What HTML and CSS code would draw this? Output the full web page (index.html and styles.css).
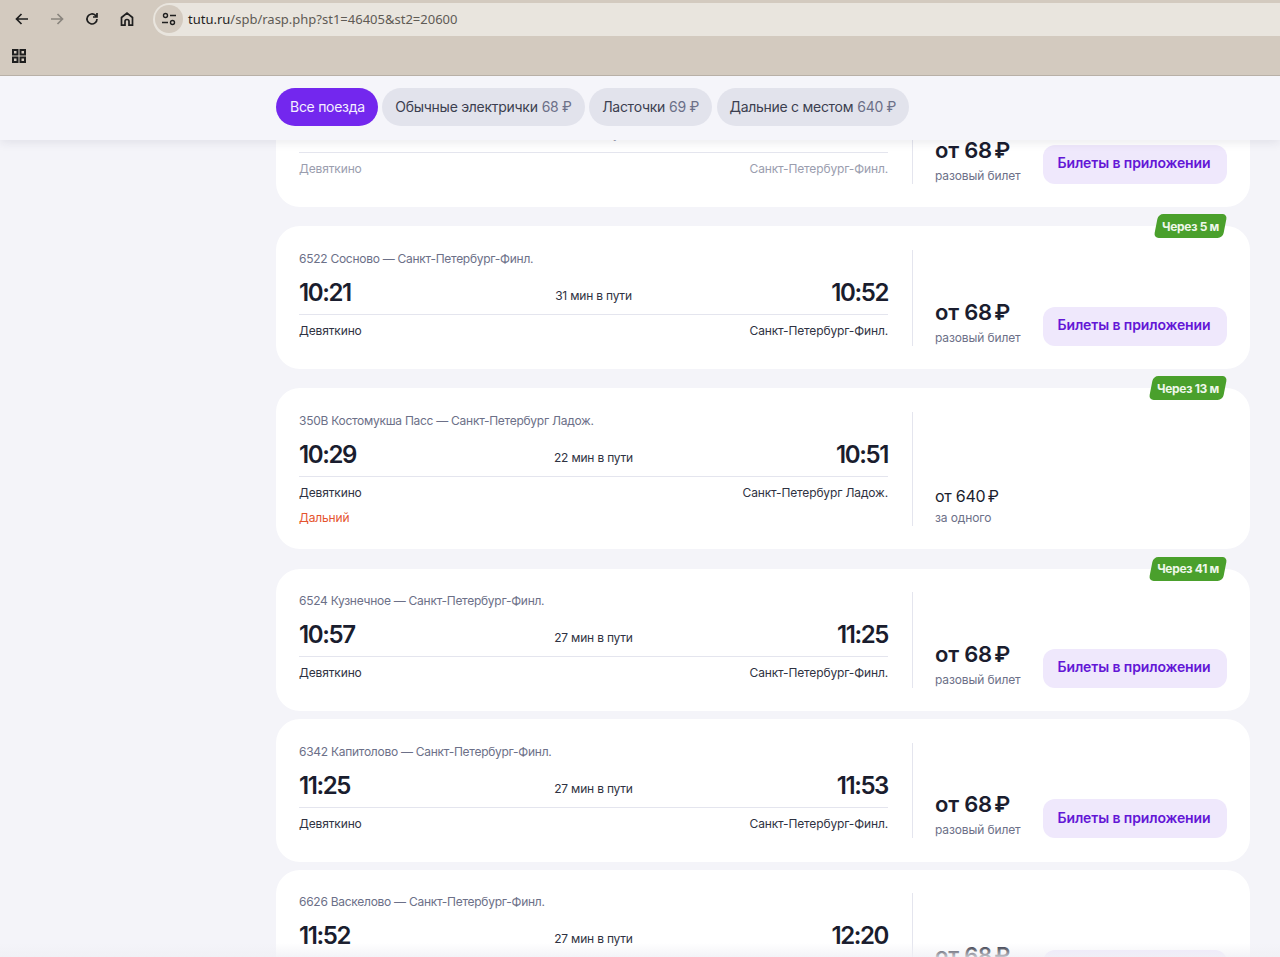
FILE: index.html
```html
<!DOCTYPE html>
<html lang="ru">
<head>
<meta charset="utf-8">
<title>tutu.ru</title>
<link rel="stylesheet" href="styles.css">
</head>
<body>
<div class="app">
  <header class="chrome">
    <div class="toolbar">
      <button class="tool"><svg width="16" height="16" viewBox="0 0 16 16"><path d="M14 8H3M7.500 3 2.500 8l5 5" class="ic"/></svg></button>
      <button class="tool"><svg width="16" height="16" viewBox="0 0 16 16"><path d="M2 8h11M8.500 3l5 5-5 5" class="ic dim"/></svg></button>
      <button class="tool"><svg width="16" height="16" viewBox="0 0 16 16"><path d="M13 8a5 5 0 1 1-1.500-3.600L13 6M13 2v4H9" class="ic"/></svg></button>
      <button class="tool"><svg width="16" height="16" viewBox="0 0 16 16"><path d="M2.500 14.200V6.500L8 2l5.500 4.500v7.700H10V10.500a2 2 0 0 0-4 0v3.700z" class="ic"/></svg></button>
      <div class="omnibox">
        <span class="site"><svg width="16" height="16" viewBox="0 0 16 16"><circle cx="4.500" cy="4.500" r="2" class="ic thin"/><path d="M9 4.500h6M1 11.500h6" class="ic thin"/><circle cx="11.500" cy="11.500" r="2" class="ic thin"/></svg></span>
        <span class="url"><b>tutu.ru</b>/spb/rasp.php?st1=46405&amp;st2=20600</span>
      </div>
    </div>
    <div class="bookmarks">
      <svg width="14" height="14" viewBox="0 0 14 14"><path d="M1 1h4.500v4.500H1zM8.500 1H13v4.500H8.500zM1 8.500h4.500V13H1zM8.500 8.500H13V13H8.500z" class="ic bold"/></svg>
    </div>
  </header>
  <div class="page">
    <nav class="filters">
      <a class="pill active">Все поезда</a>
      <a class="pill">Обычные электрички <span>68 ₽</span></a>
      <a class="pill">Ласточки <span>69 ₽</span></a>
      <a class="pill">Дальние с местом <span>640 ₽</span></a>
    </nav>
    <main class="list">
      <article class="card past">
        <div class="info">
          <p class="route">6520 Сосново — Санкт-Петербург-Финл.</p>
          <div class="times"><strong>10:13</strong><em>31 мин в пути</em><strong>10:44</strong></div>
          <div class="stations"><span>Девяткино</span><span>Санкт-Петербург-Финл.</span></div>
        </div>
        <div class="buy">
          <div class="price"><b>от 68 <i>₽</i></b><small>разовый билет</small></div>
          <a class="app-btn">Билеты в приложении</a>
        </div>
      </article>
      <article class="card c2">
        <span class="badge">Через 5 м</span>
        <div class="info">
          <p class="route">6522 Сосново — Санкт-Петербург-Финл.</p>
          <div class="times"><strong>10:21</strong><em>31 мин в пути</em><strong>10:52</strong></div>
          <div class="stations"><span>Девяткино</span><span>Санкт-Петербург-Финл.</span></div>
        </div>
        <div class="buy">
          <div class="price"><b>от 68 <i>₽</i></b><small>разовый билет</small></div>
          <a class="app-btn">Билеты в приложении</a>
        </div>
      </article>
      <article class="card c3">
        <span class="badge">Через 13 м</span>
        <div class="info">
          <p class="route">350В Костомукша Пасс — Санкт-Петербург Ладож.</p>
          <div class="times"><strong>10:29</strong><em>22 мин в пути</em><strong>10:51</strong></div>
          <div class="stations"><span>Девяткино</span><span>Санкт-Петербург Ладож.</span></div>
          <p class="kind">Дальний</p>
        </div>
        <div class="buy">
          <div class="price light"><b>от 640 <i>₽</i></b><small>за одного</small></div>
        </div>
      </article>
      <article class="card c4">
        <span class="badge">Через 41 м</span>
        <div class="info">
          <p class="route">6524 Кузнечное — Санкт-Петербург-Финл.</p>
          <div class="times"><strong>10:57</strong><em>27 мин в пути</em><strong>11:25</strong></div>
          <div class="stations"><span>Девяткино</span><span>Санкт-Петербург-Финл.</span></div>
        </div>
        <div class="buy">
          <div class="price"><b>от 68 <i>₽</i></b><small>разовый билет</small></div>
          <a class="app-btn">Билеты в приложении</a>
        </div>
      </article>
      <article class="card c5">
        <div class="info">
          <p class="route">6342 Капитолово — Санкт-Петербург-Финл.</p>
          <div class="times"><strong>11:25</strong><em>27 мин в пути</em><strong>11:53</strong></div>
          <div class="stations"><span>Девяткино</span><span>Санкт-Петербург-Финл.</span></div>
        </div>
        <div class="buy">
          <div class="price"><b>от 68 <i>₽</i></b><small>разовый билет</small></div>
          <a class="app-btn">Билеты в приложении</a>
        </div>
      </article>
      <article class="card c6">
        <div class="info">
          <p class="route">6626 Васкелово — Санкт-Петербург-Финл.</p>
          <div class="times"><strong>11:52</strong><em>27 мин в пути</em><strong>12:20</strong></div>
          <div class="stations"><span>Девяткино</span><span>Санкт-Петербург-Финл.</span></div>
        </div>
        <div class="buy">
          <div class="price"><b>от 68 <i>₽</i></b><small>разовый билет</small></div>
          <a class="app-btn">Билеты в приложении</a>
        </div>
      </article>
    </main>
    <div class="fade"></div>
  </div>
</div>
</body>
</html>
```
FILE: styles.css
```css
* { box-sizing: border-box; }
html, body { margin: 0; height: 100%; overflow: hidden; }
body { font-family: Inter, "Noto Sans", sans-serif; color: #1a1d2e; background: #f4f4f9; }
p { margin: 0; }
.app { height: 957px; display: flex; flex-direction: column; overflow: hidden; }
.chrome { flex: none; height: 76px; background: #d3cabf; border-bottom: 1px solid #b8b0a7; }
.toolbar { height: 36px; padding: 3px 0 0 4px; display: flex; align-items: center; }
.tool { width: 35px; height: 32px; padding: 0 0 2px; border: 0; background: none; display: flex; align-items: center; justify-content: center; }
.ic { fill: none; stroke: #1f1f1f; stroke-width: 1.7; }
.ic.dim { stroke: #8a857e; }
.ic.thin { stroke-width: 1.4; }
.ic.bold { stroke-width: 2; }
.omnibox { flex: 1; height: 33px; margin-left: 9px; background: #e9e5de; border-radius: 17px 0 0 17px; display: flex; align-items: center; padding: 0 0 1px 2px; }
.site { width: 28px; height: 28px; border-radius: 50%; background: #d3cabf; display: flex; align-items: center; justify-content: center; }
.url { margin-left: 5px; font: 13px "Noto Sans", sans-serif; color: #5f5b55; }
.url b { font-weight: 400; color: #1f1f1f; }
.bookmarks { height: 39px; padding: 0 0 0 12px; display: flex; align-items: center; }
.page { flex: 1; position: relative; overflow: hidden; }
.filters { position: absolute; inset: 0 0 auto 0; height: 64px; background: #f5f5fa; box-shadow: 0 2px 10px rgba(40, 40, 70, .10); display: flex; align-items: flex-start; gap: 4.5px; padding: 12px 0 0 276px; z-index: 2; }
.pill { height: 38px; padding: 0 13px 1px; border-radius: 19px; background: #e2e3ec; display: flex; align-items: center; font-size: 14px; letter-spacing: -.28px; color: #3c3f50; }
.pill span { margin-left: 4px; color: #6c7088; }
.pill.active { background: #7327ee; color: #f4efff; padding-left: 14px; }
.list { margin: -12px 0 0 276px; width: 974px; display: flex; flex-direction: column; }
.card { position: relative; flex: none; background: #fff; border-radius: 24px; height: 143px; padding: 24px 23px 23.5px; display: flex; }
.c2 { margin-top: 19px; }
.c3 { margin-top: 19px; height: 160.5px; padding-bottom: 23px; }
.c4 { margin-top: 20px; height: 142.5px; padding-top: 23px; }
.c5 { margin-top: 8px; height: 142.5px; }
.c6 { margin-top: 8px; height: 142.5px; padding-top: 23px; }
.info { width: 589px; flex: none; padding-top: 1px; }
.route { font-size: 12px; line-height: 16px; color: #6c7088; letter-spacing: -.27px; }
.times { display: grid; grid-template-columns: 1fr auto 1fr; align-items: end; height: 40px; margin-top: 8px; padding-bottom: 6px; border-bottom: 1px solid #e4e5ee; }
.times strong { font-size: 24px; line-height: 30px; font-weight: 600; letter-spacing: -1.4px; }
.times strong:last-child { justify-self: end; }
.times em { font-style: normal; font-size: 12px; line-height: 16px; letter-spacing: -.2px; color: #2f3242; margin-bottom: 4px; }
.stations { display: flex; justify-content: space-between; font-size: 12px; line-height: 16px; margin-top: 8px; letter-spacing: -.14px; color: #2f3242; }
.kind { font-size: 12px; line-height: 16px; margin-top: 9px; color: #e5532d; letter-spacing: -.14px; }
.buy { margin-left: 24px; flex: 1; border-left: 1px solid #e4e5ee; padding-left: 23px; display: flex; align-items: flex-end; justify-content: space-between; }
.price { margin-left: -1px; }
.price b { display: block; font-size: 22px; line-height: 28px; font-weight: 600; letter-spacing: -.2px; }
.price i { font-style: normal; margin-left: -3px; }
.price small { display: block; margin-top: 4px; font-size: 12px; line-height: 16px; color: #6c7088; letter-spacing: -.12px; }
.price.light b { font-size: 16px; font-weight: 400; line-height: 24px; letter-spacing: -.25px; }
.price.light i { margin-left: -2px; }
.price.light small { margin-top: 2px; }
.app-btn { width: 184px; height: 39px; border-radius: 12px; background: #efe8fc; color: #6317d6; font-size: 14px; font-weight: 600; display: flex; align-items: center; justify-content: center; letter-spacing: -.12px; padding: 0 2px 3px 0; }
.badge { position: absolute; right: 23px; top: -12px; height: 24px; padding: 0 8px; color: #eef7ea; font-size: 12px; font-weight: 700; letter-spacing: -.3px; display: flex; align-items: center; z-index: 1; }
.badge::before { content: ""; position: absolute; inset: 0 2px; z-index: -1; background: #4aa02c; border-radius: 5px; transform: skewX(-11deg); }
.past .route, .past .times, .past .stations, .past .times em { color: #9a9dae; }
.fade { position: absolute; left: 0; right: 0; bottom: 0; height: 14px; background: linear-gradient(rgba(255,255,255,0), rgba(240,240,245,.8)); }
```
